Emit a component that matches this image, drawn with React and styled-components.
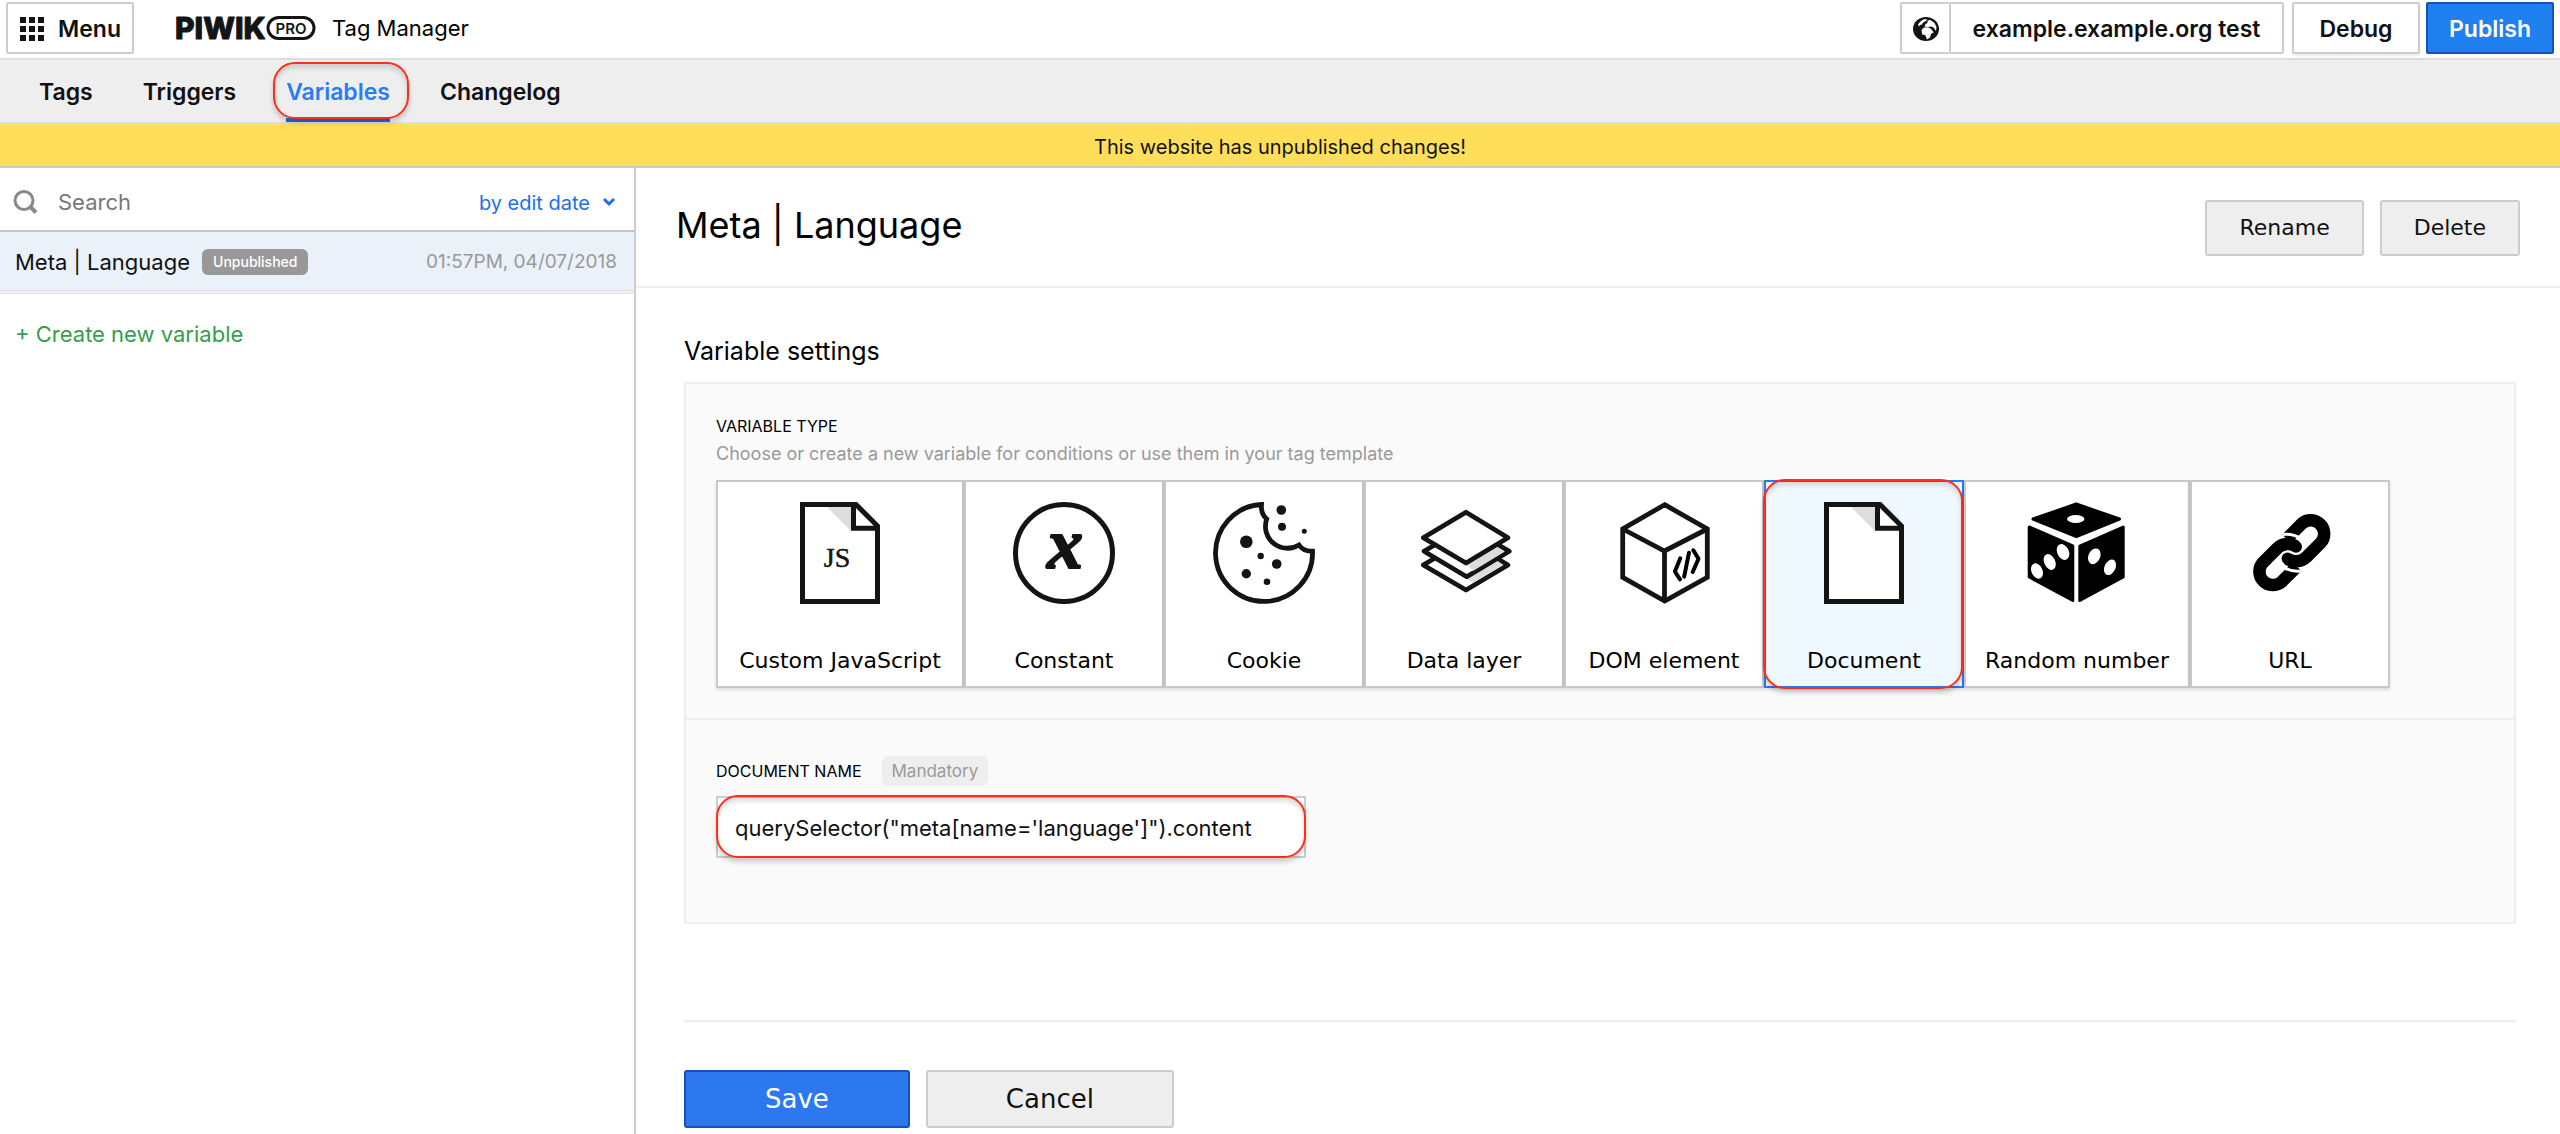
import React from 'react';
import styled, { createGlobalStyle, css } from 'styled-components';

const GlobalStyle = createGlobalStyle`
  * {
    box-sizing: border-box;
  }

  body {
    margin: 0;
    background: #fff;
    color: #000;
    font-family: Inter, 'Liberation Sans', sans-serif;
    font-size: 22px;
    line-height: 28px;
  }

  button, input, select {
    margin: 0;
    font: inherit;
    color: inherit;
  }
`;

const wide = css`
  font-family: 'DejaVu Sans', sans-serif;
`;

const Page = styled.div`
  display: flex;
  flex-direction: column;
  min-height: 100vh;
`;

const Header = styled.header`
  display: flex;
  align-items: flex-start;
  height: 60px;
  padding: 2px 6px 0;
  border-bottom: 2px solid #ddd;
`;

const HeaderButton = styled.button`
  display: flex;
  align-items: center;
  justify-content: center;
  height: 52px;
  padding: ${props => props.$pad || '2px 0 0'};
  gap: 14px;
  color: ${props => (props.$primary ? '#fff' : '#111')};
  background: ${props => (props.$primary ? '#1f80f0' : '#fff')};
  border: 2px solid ${props => (props.$primary ? '#1650b8' : '#ccc')};
  border-radius: 2px;
  font-size: 23px;
  font-weight: 600;
  cursor: pointer;
`;

const Brand = styled.a`
  display: flex;
  align-items: center;
  height: 52px;
  margin-left: 42px;
  gap: 16px;
  color: #000;
  text-decoration: none;
`;

const HeaderActions = styled.div`
  display: flex;
  margin-left: auto;
`;

const SitePicker = styled.div`
  display: flex;
  margin-right: 8px;

  button:first-child {
    width: 49px;
    border-right: 0;
  }

  button:last-child {
    width: 335px;
  }
`;

const DebugButton = styled(HeaderButton)`
  width: 128px;
  margin-right: 6px;
  box-shadow: 0 2px 2px rgba(0, 0, 0, 0.08);
`;

const PublishButton = styled(HeaderButton)`
  width: 128px;
`;

const Nav = styled.nav`
  display: flex;
  height: 64px;
  padding-left: 39px;
  gap: 50px;
  background: #eee;
  border-bottom: 2px solid #ddd;
`;

const NavLink = styled.a`
  position: relative;
  display: flex;
  align-items: center;
  padding-top: 6px;
  color: ${props => (props.$active ? '#2a7cf6' : '#111')};
  border-bottom: 4px solid ${props => (props.$active ? '#1b6fd8' : 'transparent')};
  font-size: 23px;
  font-weight: 600;
  text-decoration: none;
`;

/* Red outline drawn over the parts the reader has to look at */
const Marker = styled.span`
  position: absolute;
  inset: ${props => props.$inset};
  border: 2px solid #ff2d1a;
  border-radius: 22px;
  box-shadow: 0 4px 5px rgba(0, 0, 0, 0.18), inset 0 4px 5px rgba(0, 0, 0, 0.14);
  pointer-events: none;
`;

const Notice = styled.p`
  height: 44px;
  margin: 0;
  padding-top: 4px;
  background: #ffdf5a;
  border-bottom: 2px solid #ccc;
  color: #111;
  font-size: 20px;
  line-height: 38px;
  text-align: center;
`;

const Columns = styled.div`
  display: flex;
  flex: 1;
`;

const Sidebar = styled.aside`
  flex: 0 0 636px;
  border-right: 2px solid #ccc;
`;

const SearchRow = styled.div`
  display: flex;
  align-items: center;
  height: 64px;
  padding: 6px 18px 0 13px;
  border-bottom: 2px solid #c4c4c4;
`;

const SearchInput = styled.input`
  flex: 1;
  min-width: 0;
  margin-left: 20px;
  padding: 0;
  border: 0;
  outline: 0;
  background: none;

  &::placeholder {
    color: #777;
    opacity: 1;
  }
`;

const SortSelect = styled.select`
  appearance: none;
  field-sizing: content;
  margin-right: 12px;
  padding: 2px 0 0;
  border: 0;
  background: none;
  color: #1f6cf0;
  font-size: 20px;
`;

const ListItem = styled.a`
  display: flex;
  align-items: center;
  height: 62px;
  padding: 2px 17px 0 15px;
  background: #eaf1f9;
  border-bottom: 4px double #e2e2e2;
  color: #111;
  text-decoration: none;
`;

const StatusBadge = styled.span`
  margin-left: 12px;
  padding: 0 11px;
  border-radius: 6px;
  background: #989898;
  color: #fff;
  font-size: 14px;
  font-weight: 500;
  line-height: 26px;
`;

const EditDate = styled.time`
  margin-left: auto;
  color: #999;
  font-size: 19px;
`;

const CreateLink = styled.a`
  display: inline-block;
  margin: 26px 15px;
  color: #379d4b;
  text-decoration: none;
`;

const Main = styled.main`
  flex: 1;
  min-width: 0;
`;

const TitleBar = styled.div`
  display: flex;
  align-items: center;
  height: 120px;
  padding: 2px 40px 0;
  gap: 16px;
  border-bottom: 2px solid #eee;
`;

const Title = styled.h1`
  margin: 0 auto 6px 0;
  font-size: 36px;
  font-weight: 400;
  line-height: 48px;
`;

const Button = styled.button`
  ${wide}
  height: ${props => (props.$large ? '58px' : '56px')};
  padding: 0 ${props => props.$pad};
  color: ${props => (props.$primary ? '#fff' : '#111')};
  background: ${props => (props.$primary ? '#2d78ef' : '#eee')};
  border: 2px solid ${props => (props.$primary ? '#1650b8' : '#ccc')};
  border-radius: 3px;
  font-size: ${props => (props.$large ? '26px' : '22px')};
  cursor: pointer;
`;

const Form = styled.form`
  padding: 44px 44px 0 48px;
`;

const SectionTitle = styled.h2`
  margin: 0 0 12px;
  font-size: 25px;
  font-weight: 400;
  line-height: 38px;
`;

const Panel = styled.div`
  background: #fafafa;
  border: 2px solid #eee;
`;

const Section = styled.fieldset`
  min-width: 0;
  margin: 0;
  padding: 30px;
  border: 0;

  & + & {
    padding: 36px 30px 64px;
    border-top: 2px solid #eee;
  }
`;

const Label = styled.label`
  font-size: 16px;
  line-height: 24px;
  text-transform: uppercase;
`;

const Legend = styled.legend`
  float: left;
  width: 100%;
  padding: 0;
  font-size: 16px;
  line-height: 24px;
  text-transform: uppercase;
`;

const Hint = styled.p`
  clear: both;
  margin: 0;
  padding-top: 2px;
  color: #999;
  font-size: 18px;
  line-height: 28px;
`;

const Tiles = styled.div`
  display: flex;
  margin-top: 12px;
`;

const Tile = styled.label`
  ${wide}
  position: relative;
  display: flex;
  flex: 0 0 ${props => props.$width || '200px'};
  flex-direction: column;
  align-items: center;
  justify-content: space-between;
  height: 208px;
  padding: 20px 0 11px;
  background: ${props => (props.$active ? '#f0f9ff' : '#fff')};
  border: 2px solid ${props => (props.$active ? '#2d78ef' : '#c8c8c8')};
  box-shadow: 0 2px 3px rgba(0, 0, 0, 0.12);
  cursor: pointer;

  svg {
    display: block;
    overflow: visible;
  }
`;

const TileRadio = styled.input`
  position: absolute;
  opacity: 0;
`;

const FieldHead = styled.div`
  display: flex;
  align-items: center;
  margin-bottom: 10px;
  gap: 20px;
`;

const Mandatory = styled.span`
  padding: 0 10px;
  border-radius: 6px;
  background: #eee;
  color: #999;
  font-size: 17px;
  line-height: 30px;
`;

const Field = styled.div`
  position: relative;
  width: 590px;
  max-width: 100%;
`;

const TextInput = styled.input`
  display: block;
  width: 100%;
  height: 62px;
  padding: 2px 17px 0;
  border: 2px solid #ccc;
  background: #fff;
  color: #111;
`;

const FormActions = styled.div`
  display: flex;
  margin-top: 96px;
  padding-top: 48px;
  gap: 16px;
  border-top: 2px solid #eee;
`;

const INK = '#141414';

const GridIcon = () => (
  <svg width="24" height="24" viewBox="0 0 24 24" fill={INK}>
    {[0, 9, 18].map(y => [0, 9, 18].map(x => <rect key={`${x}-${y}`} x={x} y={y} width="6" height="6" />))}
  </svg>
);

const WordMark = styled.svg`
  overflow: visible;
`;

const Logo = () => (
  <WordMark width="140" height="26" viewBox="0 0 140 26" role="img" aria-label="Piwik PRO">
    <text
      x="-1"
      y="24"
      fontFamily="Inter, sans-serif"
      fontSize="30"
      fontWeight="800"
      fill={INK}
      stroke={INK}
      strokeWidth="1"
      strokeLinejoin="round"
    >
      PIWIK
    </text>
    <rect x="92" y="2.500" width="46" height="21" rx="10.500" fill="#fff" stroke={INK} strokeWidth="3" />
    <text x="115" y="18.500" textAnchor="middle" fontFamily="Inter, sans-serif" fontSize="15" fontWeight="600" fill={INK}>
      PRO
    </text>
  </WordMark>
);

const GlobeIcon = () => (
  <svg width="26" height="24" viewBox="0 0 26 24">
    <ellipse cx="13" cy="12" rx="13" ry="12" fill={INK} />
    <g fill="#fff">
      <path d="M5 7.500L7 5l3-2.500 4-.5-1 2-3 1.500-1 2-2 .5-1 1.500z" />
      <path d="M14.500 3.500l3-.5 4 3 2 4-.5 4-2-3-2.500-1.500-4 .5-3-.5 1-2.500 2-1z" />
      <path d="M8.500 13l2.500-2.500 4-.2 3 1.500 2.700 3.700-2.700 1.500-1 3.500-3 2-1.800-4.500-3-.5z" />
    </g>
  </svg>
);

const SearchIcon = () => (
  <svg width="25" height="25" viewBox="0 0 25 25" fill="none" stroke="#888">
    <circle cx="11" cy="10.500" r="9" strokeWidth="3" />
    <path d="M17 16.500l6 6" strokeWidth="4" />
  </svg>
);

const ChevronIcon = () => (
  <svg width="14" height="10" viewBox="0 0 14 10" fill="none" stroke="#1f6cf0" strokeWidth="3">
    <path d="M2 2l5 5 5-5" />
  </svg>
);

const PageIcon = ({ text }) => (
  <svg width="80" height="102" viewBox="0 0 80 102" stroke={INK} strokeWidth="5">
    <path d="M2.500 2.500H56L77.500 24V99.500H2.500z" fill="#fff" />
    <path d="M27 5h24v24z" fill="#ddd" stroke="none" />
    <path d="M53.500 2.500V26.200H80" fill="none" />
    {text && (
      <text
        x="37"
        y="65"
        textAnchor="middle"
        fontFamily="'Liberation Serif', serif"
        fontSize="28"
        fill={INK}
        stroke={INK}
        strokeWidth="0.500"
      >
        {text}
      </text>
    )}
  </svg>
);

const ConstantIcon = () => (
  <svg width="102" height="102" viewBox="0 0 102 102">
    <circle cx="51" cy="51" r="48.500" fill="#fff" stroke={INK} strokeWidth="5" />
    <text
      x="52"
      y="66"
      textAnchor="middle"
      fontFamily="'Liberation Serif', serif"
      fontSize="72"
      fontStyle="italic"
      fontWeight="700"
      fill={INK}
      stroke={INK}
      strokeWidth="2"
      strokeLinejoin="round"
    >
      x
    </text>
  </svg>
);

const CookieIcon = () => (
  <svg width="102" height="102" viewBox="0 0 102 102" fill={INK}>
    <path
      d="M48.500 2.500A48.500 48.500 0 1 0 99.500 49.200C94 49.500 89 47.500 86 43A22 22 0 0 1 53.700 17C49 13 48 8 48.500 2.500z"
      fill="#fff"
      stroke={INK}
      strokeWidth="4.800"
    />
    <circle cx="33.300" cy="39.700" r="6.300" />
    <circle cx="47.700" cy="54" r="3.200" />
    <circle cx="63.700" cy="62" r="4.800" />
    <circle cx="33.300" cy="71.700" r="4.700" />
    <circle cx="54" cy="79.700" r="3.300" />
    <circle cx="68.300" cy="8" r="4.800" />
    <circle cx="69" cy="24.700" r="4" />
    <circle cx="91.300" cy="29.300" r="2.500" />
  </svg>
);

const LayersIcon = () => (
  <svg width="102" height="102" viewBox="0 0 102 102" fill="#fff" stroke={INK} strokeWidth="4.800" strokeLinejoin="round">
    <path d="M53 37.700L95 63 53 88 10.300 63z" />
    <path d="M53 76l7 5 30-18-8-6z" fill="#ddd" stroke="none" />
    <path d="M53.700 24.300L96.300 49.300 53.700 74.700 11 49.300z" />
    <path d="M53 62l7 7 31-19-8-6z" fill="#ddd" stroke="none" />
    <path d="M53 10.300L95 35.700 53 61 10.300 35.700z" />
  </svg>
);

const CubeIcon = () => (
  <svg width="102" height="102" viewBox="0 0 102 102" fill="none" stroke={INK} strokeWidth="4.800">
    <path d="M51.700 2.700L94.300 27V75.300L51.700 99 9.700 75.300V27z" />
    <path d="M9.700 27L51.500 49 94.300 27M51.500 49V99" />
    <g stroke="#000" strokeWidth="4" strokeLinecap="round" strokeLinejoin="round">
      <path d="M67.300 56.300L61.900 69.500 67 77.300" />
      <path d="M76 50.700L71.200 74.700" />
      <path d="M80.300 48.300L85.500 56.700 79.700 70" />
    </g>
  </svg>
);

const DiceIcon = () => (
  <svg width="102" height="102" viewBox="0 0 102 102" fill="#fff">
    <g fill="#000" stroke="#000" strokeWidth="3" strokeLinejoin="round">
      <path d="M50.300 2L93.500 17 50.300 34.700 7 17z" />
      <path d="M3.200 25L46.800 44V98.500L3.200 75z" />
      <path d="M97.200 25L53.800 44V98.500L97.200 75z" />
    </g>
    <ellipse cx="49.700" cy="17" rx="8.700" ry="4" />
    <ellipse rx="5.800" ry="8.300" transform="translate(37 50) rotate(-25)" />
    <ellipse rx="5.500" ry="8.300" transform="translate(23.700 60) rotate(-25)" />
    <ellipse rx="5.500" ry="8" transform="translate(11 69) rotate(-25)" />
    <ellipse rx="5.800" ry="8.200" transform="translate(68.300 54.300) rotate(25)" />
    <ellipse rx="5.500" ry="8.200" transform="translate(84 65.300) rotate(25)" />
  </svg>
);

const halfLink = (
  <>
    <path d="M58 64.500L42.500 80A13.500 13.500 0 0 1 23.500 61L38.500 46C44 41 52 41 57 44.500" stroke="#000" strokeWidth="12.500" />
    <circle cx="57" cy="44.800" r="6" fill="#000" />
    <path d="M43 64Q50 70 62 69" stroke="#fff" strokeWidth="3" />
  </>
);

const LinkIcon = () => (
  <svg width="102" height="102" viewBox="0 0 102 102" fill="none">
    {halfLink}
    <g transform="rotate(180 52.800 50.700)">{halfLink}</g>
  </svg>
);

const variableTypes = [
  { name: 'Custom JavaScript', width: '248px', icon: <PageIcon text="JS" /> },
  { name: 'Constant', icon: <ConstantIcon /> },
  { name: 'Cookie', icon: <CookieIcon /> },
  { name: 'Data layer', icon: <LayersIcon /> },
  { name: 'DOM element', icon: <CubeIcon /> },
  { name: 'Document', icon: <PageIcon />, active: true },
  { name: 'Random number', width: '226px', icon: <DiceIcon /> },
  { name: 'URL', icon: <LinkIcon /> },
];

const navLinks = ['Tags', 'Triggers', 'Variables', 'Changelog'];

const TopBar = () => (
  <Header>
    <HeaderButton type="button" $pad="2px 11px 0 12px">
      <GridIcon />
      Menu
    </HeaderButton>
    <Brand href="#">
      <Logo />
      Tag Manager
    </Brand>
    <HeaderActions>
      <SitePicker>
        <HeaderButton type="button" aria-label="Websites">
          <GlobeIcon />
        </HeaderButton>
        <HeaderButton type="button">example.example.org test</HeaderButton>
      </SitePicker>
      <DebugButton type="button">Debug</DebugButton>
      <PublishButton type="button" $primary>Publish</PublishButton>
    </HeaderActions>
  </Header>
);

const VariableList = () => (
  <Sidebar>
    <SearchRow>
      <SearchIcon />
      <SearchInput type="search" placeholder="Search" aria-label="Search" />
      <SortSelect aria-label="Sort variables">
        <option>by edit date</option>
      </SortSelect>
      <ChevronIcon />
    </SearchRow>
    <ListItem href="#">
      Meta | Language
      <StatusBadge>Unpublished</StatusBadge>
      <EditDate>01:57PM, 04/07/2018</EditDate>
    </ListItem>
    <CreateLink href="#">+ Create new variable</CreateLink>
  </Sidebar>
);

const VariableForm = () => (
  <Form>
    <SectionTitle>Variable settings</SectionTitle>
    <Panel>
      <Section>
        <Legend>Variable type</Legend>
        <Hint>Choose or create a new variable for conditions or use them in your tag template</Hint>
        <Tiles>
          {variableTypes.map(type => (
            <Tile key={type.name} $width={type.width} $active={type.active}>
              <TileRadio type="radio" name="variableType" defaultChecked={type.active} />
              {type.icon}
              {type.name}
              {type.active && <Marker $inset="-3px -1px -3px -3px" />}
            </Tile>
          ))}
        </Tiles>
      </Section>
      <Section>
        <FieldHead>
          <Label htmlFor="documentName">Document name</Label>
          <Mandatory>Mandatory</Mandatory>
        </FieldHead>
        <Field>
          <TextInput id="documentName" defaultValue={`querySelector("meta[name='language']").content`} />
          <Marker $inset="-1px 0 0 0" />
        </Field>
      </Section>
    </Panel>
    <FormActions>
      <Button type="button" $large $primary $pad="79px">Save</Button>
      <Button type="button" $large $pad="78px">Cancel</Button>
    </FormActions>
  </Form>
);

const App = () => (
  <Page>
    <GlobalStyle />
    <TopBar />
    <Nav>
      {navLinks.map(name => (
        <NavLink key={name} href="#" $active={name === 'Variables'}>
          {name}
          {name === 'Variables' && <Marker $inset="2px -19px -1px -13px" />}
        </NavLink>
      ))}
    </Nav>
    <Notice>This website has unpublished changes!</Notice>
    <Columns>
      <VariableList />
      <Main>
        <TitleBar>
          <Title>Meta | Language</Title>
          <Button type="button" $pad="32px">Rename</Button>
          <Button type="button" $pad="32px">Delete</Button>
        </TitleBar>
        <VariableForm />
      </Main>
    </Columns>
  </Page>
);

export default App;
